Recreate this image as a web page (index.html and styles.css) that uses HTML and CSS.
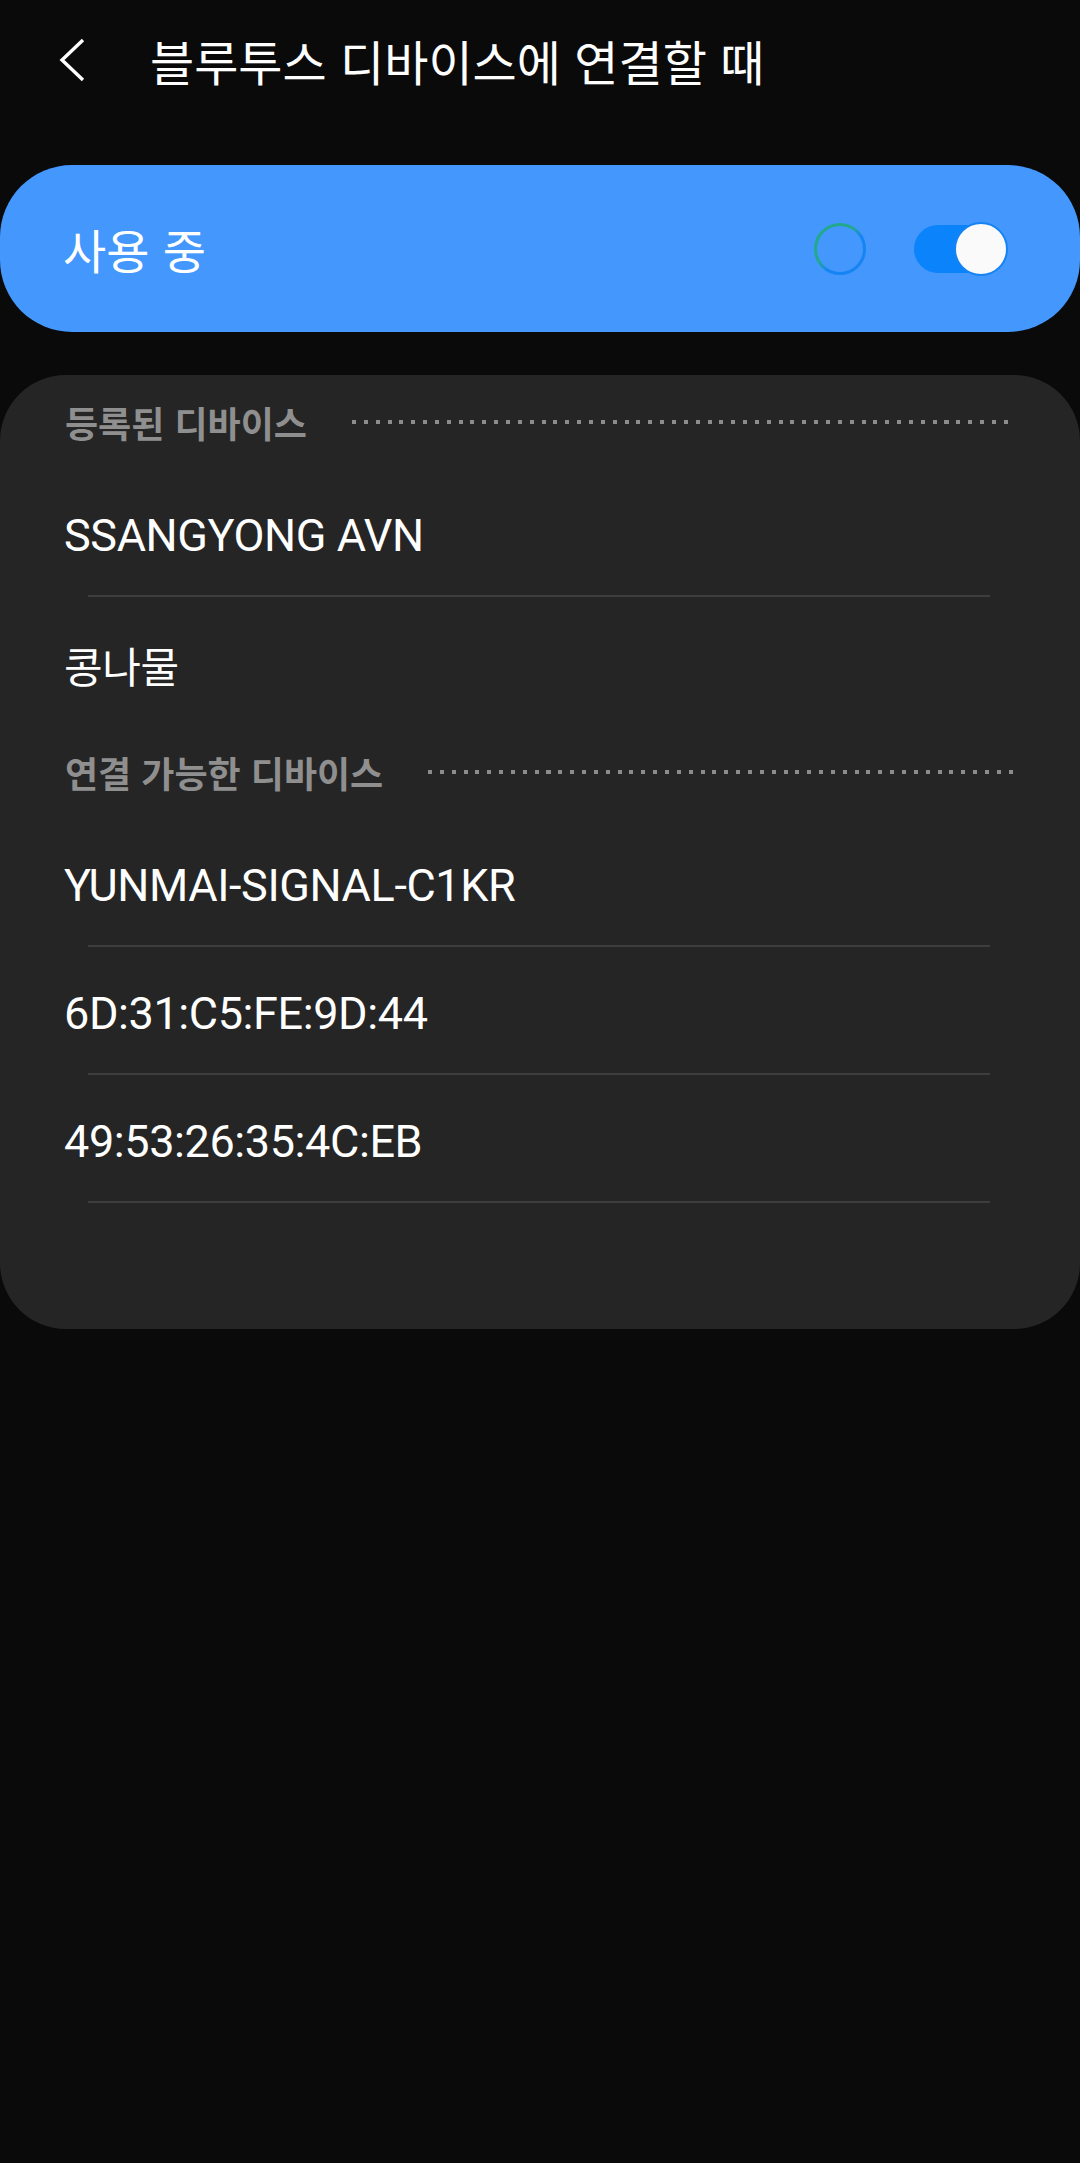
FILE: index.html
```html
<!DOCTYPE html>
<html lang="ko">
<head>
    <meta charset="UTF-8">
    <meta name="viewport" content="width=device-width, initial-scale=1.0">
    <title>블루투스 디바이스에 연결할 때</title>
    <link rel="stylesheet" href="styles.css">
</head>
<body>
    <!--TITULO-->
    <div class="topbar">
        <svg class="back" width="28" height="46" viewBox="0 0 28 46">
            <polyline points="25,3 4,23 25,43" fill="none" stroke="#ffffff" stroke-width="3.4" stroke-linejoin="miter"/>
        </svg>
        <h1 class="titulo">블루투스 디바이스에 연결할 때</h1>
    </div>

    <!--INTERRUPTOR-->
    <div class="switchbar">
        <div class="switchbar-label">사용 중</div>
        <svg class="anillo" width="56" height="56" viewBox="0 0 56 56">
            <defs>
                <linearGradient id="grad" x1="0" y1="0" x2="1" y2="1">
                    <stop offset="0.42" stop-color="#22a98c"/>
                    <stop offset="0.58" stop-color="#1784f3"/>
                </linearGradient>
            </defs>
            <circle cx="28" cy="28" r="24.5" fill="none" stroke="url(#grad)" stroke-width="3"/>
        </svg>
        <div class="toggle">
            <div class="track"></div>
            <div class="thumb"></div>
        </div>
    </div>

    <!--LISTA-->
    <div class="card">
        <div class="grupo">
            <span>등록된 디바이스</span>
            <div class="puntos"></div>
        </div>
        <div class="device">SSANGYONG AVN</div>
        <div class="divider"></div>
        <div class="device kr">콩나물</div>

        <div class="grupo">
            <span>연결 가능한 디바이스</span>
            <div class="puntos"></div>
        </div>
        <div class="device">YUNMAI-SIGNAL-C1KR</div>
        <div class="divider"></div>
        <div class="device">6D:31:C5:FE:9D:44</div>
        <div class="divider"></div>
        <div class="device">49:53:26:35:4C:EB</div>
        <div class="divider"></div>
    </div>
</body>
</html>
```

FILE: styles.css
```css
body {
    margin: 0;
    background-color: #0a0a0a;
    color: #ffffff;
    font-family: Roboto, "Noto Sans CJK KR", sans-serif;
}
.topbar {
    display: flex;
    align-items: center;
    height: 120px;
    padding-left: 58px;
    padding-bottom: 4px;
}
.back {
    display: block;
}
.titulo {
    margin: 0 0 0 64px;
    font-family: "Noto Sans CJK KR", sans-serif;
    font-size: 48px;
    font-weight: 400;
    line-height: 1;
}

.switchbar {
    display: flex;
    align-items: center;
    height: 167px;
    margin-top: 41px;
    padding: 0 72px 0 63px;
    background-color: #4397fd;
    border-radius: 72px;
}
.switchbar-label {
    flex: 1;
    font-family: "Noto Sans CJK KR", sans-serif;
    font-size: 47px;
}
.anillo {
    display: block;
    margin-right: 46px;
}
.toggle {
    position: relative;
    width: 94px;
    height: 54px;
}
.track {
    width: 84px;
    height: 48px;
    margin-top: 3px;
    background-color: #0b84fb;
    border-radius: 24px;
}
.thumb {
    position: absolute;
    top: 0;
    right: 0;
    width: 50px;
    height: 50px;
    background-color: #fafafa;
    border: 2px solid #1683f4;
    border-radius: 50%;
}

.card {
    margin-top: 43px;
    padding-bottom: 126px;
    background-color: #252525;
    border-radius: 66px;
}
.grupo {
    display: flex;
    align-items: center;
    height: 94px;
    padding: 0 66px 0 65px;
    color: #8f8f8f;
    font-family: "Noto Sans CJK KR", sans-serif;
    font-size: 36px;
    font-weight: 700;
}
.puntos {
    flex: 1;
    height: 4px;
    margin-left: 45px;
    background-image: repeating-linear-gradient(to right, #8c8c8c 0, #8c8c8c 4px, transparent 4px, transparent 11.85px);
}
.device {
    display: flex;
    align-items: center;
    height: 120px;
    padding: 6px 0 0 64px;
    font-size: 45px;
    letter-spacing: -0.4px;
}
.device.kr {
    height: 122px;
    font-size: 42px;
}
.divider {
    height: 2px;
    margin: 0 90px 0 88px;
    background-color: #3e3e3e;
}
```
